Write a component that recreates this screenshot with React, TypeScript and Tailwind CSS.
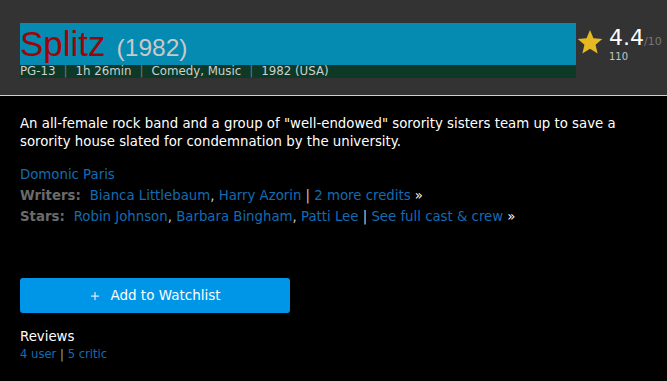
import { Plus } from 'lucide-react';

const sans = "font-['DejaVu_Sans',Verdana,sans-serif]";
const arial = "font-['Liberation_Sans',Arial,sans-serif]";

const meta = ['PG-13', '1h 26min', 'Comedy, Music', '1982 (USA)'];

function Sep() {
    return <span className="px-[8px] text-[#777]">|</span>;
}

export default function App() {
    return (
        <div className={`min-h-[381px] w-[667px] bg-black ${sans}`}>
            <header className="flex h-[96px] items-start border-b border-[#cfcfcf] bg-[#333333] pl-5 pt-[23px]">
                <div className="w-[556px]">
                    <div className={`flex h-[42px] items-end bg-[#058ab1] pb-[4px] ${arial}`}>
                        <h1 className="text-[35px] leading-none text-[#9a0707]">Splitz</h1>
                        <span className="ml-[11px] pb-[1px] text-[24.5px] leading-none text-[#c9c9c9]">(1982)</span>
                    </div>
                    <div className="flex h-[13px] items-center bg-[#0e3926] text-[11.8px] leading-none text-[#cfcfcf]">
                        {meta.map((m, i) => (
                            <span key={m} className="flex">
                                {i > 0 && <Sep />}
                                {m}
                            </span>
                        ))}
                    </div>
                </div>

                <div className="flex items-start pt-[4px]">
                    <svg width="28" height="28" viewBox="0 0 24 24" className="mt-[1px]">
                        <path
                            d="M12 1.8l2.95 7.05 7.6.6-5.8 4.95 1.8 7.4L12 17.8l-6.55 4 1.8-7.4-5.8-4.95 7.6-.6z"
                            fill="#e5b922"
                        />
                    </svg>
                    <div className="ml-[5px]">
                        <div className="flex items-baseline">
                            <span className="text-[22px] leading-none text-white">4.4</span>
                            <span className="text-[11px] text-[#777]">/10</span>
                        </div>
                        <div className="mt-[1px] text-[10px] leading-none text-[#c4c4c4]">110</div>
                    </div>
                </div>
            </header>

            <main className="px-5 pt-[19px] text-[13.3px]">
                <p className="leading-[18px] text-white">
                    An all-female rock band and a group of "well-endowed" sorority sisters team up to save a
                    sorority house slated for condemnation by the university.
                </p>

                <div className="mt-[15px] space-y-[3px] leading-[18px]">
                    <div>
                        <a className="text-[#136cb2]">Domonic Paris</a>
                    </div>
                    <div>
                        <span className="mr-[9px] font-bold text-[#6b6b6b]">Writers:</span>
                        <a className="text-[#136cb2]">Bianca Littlebaum</a>
                        <span className="text-[#ccc]">, </span>
                        <a className="text-[#136cb2]">Harry Azorin</a>
                        <span className="text-[#ccc]"> | </span>
                        <a className="text-[#136cb2]">2 more credits</a>
                        <span className="text-white"> »</span>
                    </div>
                    <div>
                        <span className="mr-[9px] font-bold text-[#6b6b6b]">Stars:</span>
                        <a className="text-[#136cb2]">Robin Johnson</a>
                        <span className="text-[#ccc]">, </span>
                        <a className="text-[#136cb2]">Barbara Bingham</a>
                        <span className="text-[#ccc]">, </span>
                        <a className="text-[#136cb2]">Patti Lee</a>
                        <span className="text-[#ccc]"> | </span>
                        <a className="text-[#136cb2]">See full cast &amp; crew</a>
                        <span className="text-white"> »</span>
                    </div>
                </div>

                <button
                    type="button"
                    className="mt-[52px] flex h-[35px] w-[270px] items-center justify-center gap-[9px] rounded-[3px] bg-[#0096e8] text-[13.5px] text-white"
                >
                    <Plus size={12} strokeWidth={2.5} className="text-[#d8ecf8]" />
                    Add to Watchlist
                </button>

                <div className="mt-[15px]">
                    <div className="leading-[18px] text-white">Reviews</div>
                    <div className="mt-[1px] text-[11.6px] leading-[14px]">
                        <a className="text-[#136cb2]">4 user</a>
                        <span className="text-[#8ba]"> | </span>
                        <a className="text-[#136cb2]">5 critic</a>
                    </div>
                </div>
            </main>
        </div>
    );
}
